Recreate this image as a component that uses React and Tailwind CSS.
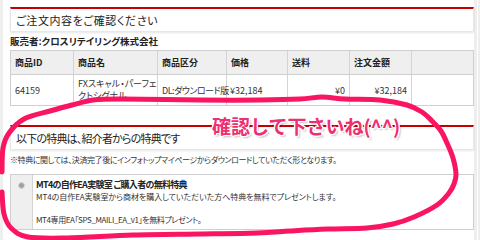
import React from "react";

const pts = [
  [2, 172], [3, 148], [9, 133], [24, 119], [50, 111], [72, 105], [93, 100], [120, 99], [200, 100],
  [260, 100], [300, 99], [322, 97], [345, 99], [380, 100], [407, 105], [422, 112], [432, 121],
  [441, 131], [447, 143], [453, 158], [456, 174], [454, 184], [449, 193], [437, 205], [414, 217],
  [393, 224], [367, 228], [327, 229], [290, 231], [257, 233], [200, 234], [133, 235], [67, 238],
  [28, 237], [11, 228], [4, 214], [2, 192],
];

function smoothPath(p) {
  let d = `M${p[0][0]},${p[0][1]}`;
  for (let i = 0; i < p.length - 1; i++) {
    const p0 = p[i - 1] || p[i];
    const p1 = p[i];
    const p2 = p[i + 1];
    const p3 = p[i + 2] || p2;
    const c1x = p1[0] + (p2[0] - p0[0]) / 6;
    const c1y = p1[1] + (p2[1] - p0[1]) / 6;
    const c2x = p2[0] - (p3[0] - p1[0]) / 6;
    const c2y = p2[1] - (p3[1] - p1[1]) / 6;
    d += ` C${c1x.toFixed(1)},${c1y.toFixed(1)} ${c2x.toFixed(1)},${c2y.toFixed(1)} ${p2[0]},${p2[1]}`;
  }
  return d;
}

const cols = [
  { w: "w-[63px]", h: "商品ID" },
  { w: "w-[84px]", h: "商品名" },
  { w: "w-[69px]", h: "商品区分" },
  { w: "w-[61px]", h: "価格" },
  { w: "w-[62px]", h: "送料" },
  { w: "w-[62px]", h: "注文金額" },
  { w: "w-[61px]", h: "" },
];

export default function App() {
  return (
    <div
      className="relative flex w-[480px] h-[240px] overflow-hidden bg-[#eeeeee] text-[#333] [font-feature-settings:'palt']"
      style={{ fontFamily: '"Noto Sans CJK JP", "Noto Sans", sans-serif' }}
    >
      <div className="ml-[3px] w-[471px] shrink-0 h-[240px] bg-white pl-[7px] pt-[7px]">
        {/* heading 1 */}
        <div className="border-t-2 border-[#c60000] bg-white border-x border-x-[#e6e6e6] shadow-[0_2px_2px_rgba(0,0,0,0.10)] h-[24px] flex items-center pl-[5px] text-[11px] tracking-[0.6px] leading-none text-[#222]">
          ご注文内容をご確認ください
        </div>
        <div className="mt-[4px] h-[14px] flex items-center text-[9.5px] font-bold leading-none text-[#222]">
          販売者:クロスリテイリング株式会社
        </div>
        {/* table */}
        <div className="mt-[1px] border border-[#cfcfcf] text-[9px] leading-[11px] text-[#333]">
          <div className="flex h-[24px] bg-[#efefef] border-b border-[#cfcfcf] font-bold text-[#222]">
            {cols.map((c, i) => (
              <div
                key={i}
                className={`${c.w} shrink-0 flex items-center pl-[4px] ${i < 6 ? "border-r border-[#d4d4d4]" : ""}`}
              >
                {c.h}
              </div>
            ))}
          </div>
          <div className="flex h-[30px]">
            <div className="w-[63px] shrink-0 flex items-center pl-[4px] border-r border-[#d4d4d4]">64159</div>
            <div className="w-[84px] shrink-0 flex flex-col justify-center pl-[4px] border-r border-[#d4d4d4] whitespace-nowrap leading-[12px]">
              <span>FXスキャル・パーフェ</span>
              <span>クトシグナル</span>
            </div>
            <div className="w-[69px] shrink-0 flex items-center pl-[4px] border-r border-[#d4d4d4] whitespace-nowrap tracking-[-0.5px]">
              DL:ダウンロード版
            </div>
            <div className="w-[61px] shrink-0 flex items-center pl-[3px] border-r border-[#d4d4d4]">¥32,184</div>
            <div className="w-[62px] shrink-0 flex items-center justify-end pr-[4px] border-r border-[#d4d4d4]">¥0</div>
            <div className="w-[62px] shrink-0 flex items-center justify-end pr-[4px] border-r border-[#d4d4d4]">¥32,184</div>
            <div className="w-[61px] shrink-0"></div>
          </div>
        </div>
        {/* heading 2 */}
        <div className="mt-[19px] border-t-2 border-[#c60000] bg-white border-x border-x-[#e6e6e6] shadow-[0_2px_2px_rgba(0,0,0,0.10)] h-[24px] flex items-center pl-[5px] text-[11px] tracking-[-0.8px] leading-none text-[#222]">
          以下の特典は、紹介者からの特典です
        </div>
        <div className="mt-[4px] h-[14px] flex items-center text-[8px] tracking-[-0.4px] leading-none text-[#333] whitespace-nowrap">
          ※特典に関しては、決済完了後にインフォトップマイページからダウンロードしていただく形となります。
        </div>
        {/* bonus box */}
        <div className="mt-[7px] flex h-[56px] border border-[#cfcfcf]">
          <div className="w-[22px] shrink-0 bg-[#efefef] border-r border-[#d4d4d4] flex justify-center pt-[7px]">
            <span className="block w-[7px] h-[7px] rounded-full bg-[#a0a0a0] border border-[#d8d8d8]"></span>
          </div>
          <div className="pl-[3px] pt-[4px] text-[8px] leading-[12px] text-[#333] whitespace-nowrap">
            <div className="font-bold text-[9px] tracking-[-0.7px] leading-[12px] text-[#222]">MT4の自作EA実験室 ご購入者の無料特典</div>
            <div className="tracking-[-0.05px]">MT4の自作EA実験室から商材を購入していただいた方へ特典を無料でプレゼントします。</div>
            <div className="h-[11px]"></div>
            <div className="tracking-[-0.4px]">MT4専用EA「SPS_MAILI_EA_v1」を無料プレゼント。</div>
          </div>
        </div>
      </div>
      <div className="w-[3px] shrink-0"></div>
      <div className="w-[1px] shrink-0 bg-white"></div>

      {/* hand-drawn annotation */}
      <svg className="absolute left-0 top-0 pointer-events-none" width="480" height="240" viewBox="0 0 480 240">
        <path d={smoothPath(pts)} fill="none" stroke="#fa1560" strokeWidth="5" strokeLinecap="round" strokeLinejoin="round" />
      </svg>
      <div
        className="absolute left-[212px] top-[116px] text-[19px] font-bold leading-none text-[#ee2f72] whitespace-nowrap [font-feature-settings:normal]"
        style={{
          textShadow:
            "1px 0 0 #fff, -1px 0 0 #fff, 0 1px 0 #fff, 0 -1px 0 #fff, 1px 1px 0 #fff, -1px -1px 0 #fff, 1px -1px 0 #fff, -1px 1px 0 #fff, 2px 2px 2px rgba(0,0,0,0.25)",
        }}
      >
        確認して下さいね(^^)
      </div>
    </div>
  );
}
